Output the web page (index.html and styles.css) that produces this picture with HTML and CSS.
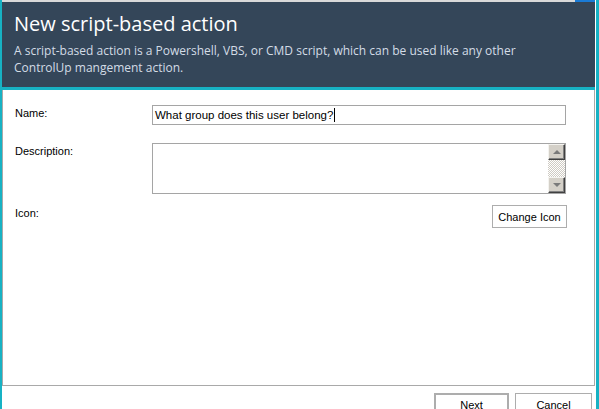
FILE: index.html
```html
<!DOCTYPE html>
<html>
<head>
<meta charset="utf-8">
<link rel="stylesheet" href="styles.css">
</head>
<body>
<div class="frame">
  <div class="edge-left"></div>
  <div class="main">
    <div class="topline"><div class="topline-accent"></div></div>
    <div class="header">
      <div class="title">New script-based action</div>
      <div class="subtitle">A script-based action is a Powershell, VBS, or CMD script, which can be used like any other ControlUp mangement action.</div>
    </div>
    <div class="accent-band"></div>
    <div class="panel">
      <div class="form">
        <div class="label">Name:</div>
        <div class="field"><div class="input">What group does this user belong?<span class="caret"></span></div></div>
        <div class="label">Description:</div>
        <div class="field">
          <div class="textarea">
            <div class="scrollbar">
              <div class="sb-btn"><span class="arrow-up"></span></div>
              <div class="sb-track"></div>
              <div class="sb-btn"><span class="arrow-down"></span></div>
            </div>
          </div>
        </div>
        <div class="label">Icon:</div>
        <div class="field field-right"><div class="btn">Change Icon</div></div>
      </div>
    </div>
    <div class="footer">
      <div class="btn btn-default">Next</div>
      <div class="btn btn-footer">Cancel</div>
    </div>
  </div>
  <div class="gap-right"></div>
  <div class="edge-right"></div>
</div>
</body>
</html>
```
FILE: styles.css
```css
html, body {
  margin: 0;
  padding: 0;
  width: 599px;
  height: 409px;
  overflow: hidden;
  background: #ffffff;
}
.frame {
  display: flex;
  width: 599px;
  height: 409px;
}
.edge-left {
  width: 2px;
  background: #17b2c4;
  flex: none;
}
.main {
  width: 593px;
  flex: none;
  display: flex;
  flex-direction: column;
}
.main > * {
  flex: none;
}
.gap-right {
  width: 1px;
  flex: none;
  background: #ffffff;
}
.edge-right {
  width: 3px;
  flex: none;
  background: #17b2c4;
}
.topline {
  height: 2px;
  background: #d9d9d9;
  display: flex;
  justify-content: flex-end;
}
.topline-accent {
  width: 20px;
  height: 2px;
  background: #1a7bd6;
}
.header {
  height: 85px;
  box-sizing: border-box;
  background: #344659;
  padding: 8px 12px 0 12px;
  font-family: "Open Sans", sans-serif;
}
.title {
  color: #ffffff;
  font-size: 20px;
  line-height: 27px;
}
.subtitle {
  color: #d3dce6;
  font-size: 12px;
  line-height: 17px;
  margin-top: 5px;
  width: 530px;
}
.accent-band {
  height: 3px;
  background: #17b2c4;
}
.panel {
  height: 296px;
  box-sizing: border-box;
  border: 1px solid #a9a9a9;
  border-top: none;
  padding: 15px 27px 0 12px;
}
.form {
  display: grid;
  grid-template-columns: 137px 1fr;
  row-gap: 0;
  font-family: "Liberation Sans", Arial, sans-serif;
  font-size: 11px;
  color: #000000;
}
.label {
  padding-top: 2px;
  line-height: 13px;
}
.field {
  display: flex;
}
.field-right {
  justify-content: flex-end;
}
.input {
  width: 414px;
  height: 20px;
  box-sizing: border-box;
  border: 1px solid #a5a5a5;
  padding: 0 0 0 2px;
  line-height: 18px;
  font-size: 11.5px;
  color: #000;
  display: flex;
  align-items: center;
  margin-bottom: 18px;
}
.caret {
  display: inline-block;
  width: 1px;
  height: 14px;
  background: #000;
  margin-left: 1px;
}
.textarea {
  width: 414px;
  height: 51px;
  box-sizing: border-box;
  border: 1px solid #a5a5a5;
  display: flex;
  justify-content: flex-end;
  margin-bottom: 11px;
}
.scrollbar {
  width: 17px;
  display: flex;
  flex-direction: column;
}
.sb-btn {
  height: 16px;
  flex: none;
  box-sizing: border-box;
  background: #d4d0c8;
  border-top: 1px solid #f4f3ef;
  border-left: 1px solid #f4f3ef;
  border-right: 1px solid #404040;
  border-bottom: 1px solid #404040;
  box-shadow: inset -1px -1px 0 #808080;
  display: flex;
  align-items: center;
  justify-content: center;
}
.sb-track {
  flex: 1;
  background-color: #ffffff;
  background-image: repeating-conic-gradient(#cfcbc3 0 25%, #ffffff 0 50%);
  background-size: 2px 2px;
}
.arrow-up {
  width: 0;
  height: 0;
  border-left: 4px solid transparent;
  border-right: 4px solid transparent;
  border-bottom: 4px solid #7a7a7a;
}
.arrow-down {
  width: 0;
  height: 0;
  border-left: 4px solid transparent;
  border-right: 4px solid transparent;
  border-top: 4px solid #7a7a7a;
}
.btn {
  box-sizing: border-box;
  border: 1px solid #adadad;
  background: #ffffff;
  font-family: "Liberation Sans", Arial, sans-serif;
  font-size: 11px;
  color: #000;
  display: flex;
  justify-content: center;
  align-items: center;
  width: 75px;
  height: 23px;
}
.footer {
  display: flex;
  justify-content: flex-end;
  gap: 6px;
  padding: 7px 3px 0 0;
}
.btn-default {
  border: 2px solid #adadad;
  width: 75px;
  height: 26px;
  align-items: flex-start;
  padding-top: 4px;
  line-height: 12px;
}
.btn-footer {
  width: 77px;
  height: 26px;
  align-items: flex-start;
  padding-top: 5px;
  line-height: 12px;
}
```
